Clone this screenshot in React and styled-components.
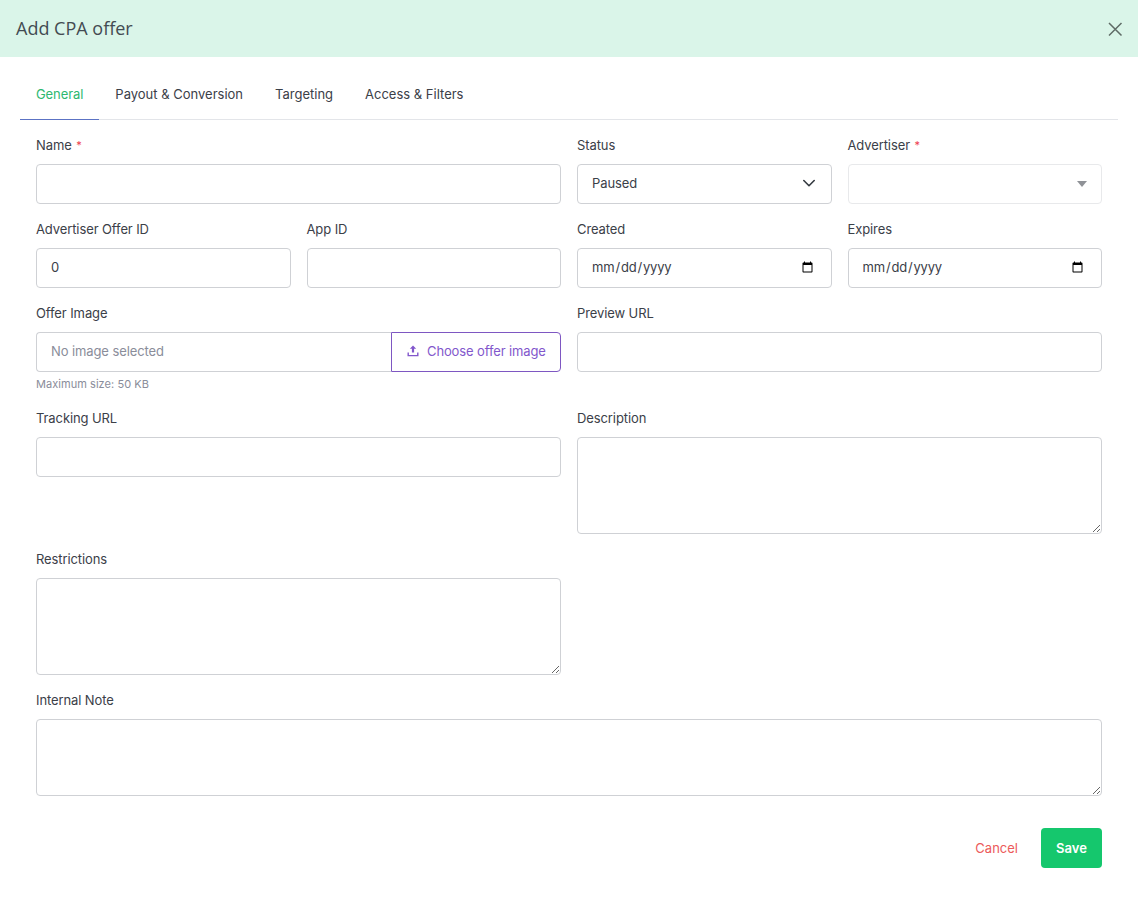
import styled, { createGlobalStyle } from "styled-components";

const GlobalStyle = createGlobalStyle`
  * {
    box-sizing: border-box;
  }

  html,
  body {
    margin: 0;
    background: #ffffff;
  }

  body {
    font-family: "Inter", "Roboto", sans-serif;
    font-size: 13px;
    color: #3b4048;
  }
`;

const tabs = ["General", "Payout & Conversion", "Targeting", "Access & Filters"];

const Required = () => <Star>*</Star>;

const CloseIcon = () => (
  <svg width="16" height="16" viewBox="0 0 16 16" fill="none" stroke="currentColor" strokeWidth="1.5">
    <path d="M2 2l12.500 12.500M14.500 2L2 14.500" />
  </svg>
);

const ChevronIcon = () => (
  <svg width="14" height="14" viewBox="0 0 14 14" fill="none" stroke="#343a40" strokeWidth="1.6" strokeLinecap="round" strokeLinejoin="round">
    <path d="M1.800 4.500L7 9.700l5.200-5.200" />
  </svg>
);

const UploadIcon = () => (
  <svg width="12" height="12" viewBox="0 0 12 12" fill="currentColor">
    <path d="M6 0.500l3.200 3.300H7.100v3.700H4.900V3.800H2.800z" />
    <path d="M0.500 7.500h1.400v2.400h8.200V7.500h1.400v3.800h-11z" />
  </svg>
);

const App = () => {
  return (
    <>
      <GlobalStyle />
      <Modal>
        <Header>
          <Title>Add CPA offer</Title>
          <CloseButton aria-label="Close">
            <CloseIcon />
          </CloseButton>
        </Header>

        <Body>
          <Tabs>
            {tabs.map((tab, i) => (
              <Tab key={tab} $active={i === 0}>
                {tab}
              </Tab>
            ))}
          </Tabs>

          <Form>
            <Field $span={2}>
              <Label>
                Name <Required />
              </Label>
              <Input type="text" />
            </Field>
            <Field>
              <Label>Status</Label>
              <SelectWrap>
                <Select defaultValue="paused">
                  <option value="paused">Paused</option>
                  <option value="active">Active</option>
                </Select>
                <SelectIcon>
                  <ChevronIcon />
                </SelectIcon>
              </SelectWrap>
            </Field>
            <Field>
              <Label>
                Advertiser <Required />
              </Label>
              <Combo>
                <ComboCaret />
              </Combo>
            </Field>

            <Field>
              <Label>Advertiser Offer ID</Label>
              <Input type="text" defaultValue="0" />
            </Field>
            <Field>
              <Label>App ID</Label>
              <Input type="text" />
            </Field>
            <Field>
              <Label>Created</Label>
              <DateInput type="date" />
            </Field>
            <Field>
              <Label>Expires</Label>
              <DateInput type="date" />
            </Field>

            <Field $span={2}>
              <Label>Offer Image</Label>
              <FileRow>
                <FileName>No image selected</FileName>
                <FileButton type="button">
                  <UploadIcon />
                  Choose offer image
                </FileButton>
              </FileRow>
              <Hint>Maximum size: 50 KB</Hint>
            </Field>
            <Field $span={2}>
              <Label>Preview URL</Label>
              <Input type="text" />
            </Field>

            <Field $span={2}>
              <Label>Tracking URL</Label>
              <Input type="text" />
            </Field>
            <Field $span={2}>
              <Label>Description</Label>
              <TextArea $height={97} />
            </Field>

            <Field $span={2}>
              <Label>Restrictions</Label>
              <TextArea $height={97} />
            </Field>
            <Field $span={2} />

            <Field $span={4}>
              <Label>Internal Note</Label>
              <TextArea $height={77} />
            </Field>
          </Form>

          <Footer>
            <CancelButton type="button">Cancel</CancelButton>
            <SaveButton type="button">Save</SaveButton>
          </Footer>
        </Body>
      </Modal>
    </>
  );
};

const Modal = styled.div`
  width: 1138px;
  height: 904px;
  background: #ffffff;
  overflow: hidden;
`;

const Header = styled.header`
  display: flex;
  align-items: center;
  justify-content: space-between;
  height: 57px;
  padding: 0 15px 0 16px;
  background: #daf5e9;
`;

const Title = styled.h5`
  margin: 0 0 2px;
  font-family: "Open Sans", sans-serif;
  font-size: 18px;
  font-weight: 500;
  color: #434b52;
`;

const CloseButton = styled.button`
  display: flex;
  padding: 0;
  border: none;
  background: none;
  color: #5f6b66;
  cursor: pointer;
`;

const Body = styled.div`
  padding: 18px 20px 0;
`;

const Tabs = styled.nav`
  display: flex;
  height: 45px;
  border-bottom: 1px solid #e3e5e9;
`;

const Tab = styled.a`
  display: flex;
  align-items: center;
  height: 45px;
  padding: 0 16px 6px;
  letter-spacing: ${(p) => (p.$active ? "-0.08px" : "0")};
  color: ${(p) => (p.$active ? "#2db870" : "#3b4048")};
  border-bottom: 1px solid ${(p) => (p.$active ? "#5c73c4" : "transparent")};
  cursor: pointer;
`;

const Form = styled.form`
  display: grid;
  grid-template-columns: repeat(4, 1fr);
  column-gap: 16px;
  row-gap: 16px;
  padding: 16px 16px 0;
`;

const Field = styled.div`
  grid-column: span ${(p) => p.$span || 1};
  min-width: 0;
`;

const Label = styled.label`
  display: block;
  height: 20px;
  margin-bottom: 8px;
  line-height: 18px;
  letter-spacing: -0.1px;
  color: #3b4048;
`;

const Star = styled.span`
  margin-left: 1px;
  font-size: 11px;
  vertical-align: 1px;
  color: #ee3b4e;
`;

const Input = styled.input`
  display: block;
  width: 100%;
  height: 40px;
  padding: 0 15px 2px 14px;
  font: inherit;
  letter-spacing: -0.1px;
  color: #3b4048;
  background: #ffffff;
  border: 1px solid #cfd1d5;
  border-radius: 4px;
  outline: none;
`;

const DateInput = styled(Input)`
  padding-left: 13px;
  letter-spacing: -0.2px;
`;

const SelectWrap = styled.div`
  position: relative;
`;

const Select = styled.select`
  display: block;
  width: 100%;
  height: 40px;
  padding: 0 15px 2px 14px;
  font: inherit;
  letter-spacing: -0.1px;
  color: #3b4048;
  background: #ffffff;
  border: 1px solid #cfd1d5;
  border-radius: 4px;
  outline: none;
  appearance: none;
`;

const SelectIcon = styled.span`
  position: absolute;
  top: 12px;
  right: 16px;
  display: flex;
  pointer-events: none;
`;

const Combo = styled.div`
  display: flex;
  align-items: center;
  justify-content: flex-end;
  height: 40px;
  padding-right: 14px;
  border: 1px solid #e8e9eb;
  border-radius: 4px;
`;

const ComboCaret = styled.span`
  width: 0;
  height: 0;
  border-top: 6px solid #8f9297;
  border-left: 5.500px solid transparent;
  border-right: 5.500px solid transparent;
`;

const FileRow = styled.div`
  display: flex;
  height: 40px;
`;

const FileName = styled.div`
  flex: 1;
  display: flex;
  align-items: center;
  padding: 0 0 2px 14px;
  letter-spacing: -0.1px;
  color: #8a8d9a;
  border: 1px solid #cfd1d5;
  border-right: none;
  border-radius: 4px 0 0 4px;
`;

const FileButton = styled.button`
  display: flex;
  align-items: center;
  gap: 8px;
  width: 170px;
  padding: 0 0 2px 15px;
  font: inherit;
  letter-spacing: -0.12px;
  color: #8257cc;
  background: #ffffff;
  border: 1px solid #7e57c2;
  border-radius: 0 4px 4px 0;
  white-space: nowrap;
  cursor: pointer;
`;

const Hint = styled.div`
  height: 21px;
  padding-top: 4px;
  font-size: 11px;
  line-height: 16px;
  letter-spacing: 0.05px;
  color: #8a8d9a;
`;

const TextArea = styled.textarea`
  display: block;
  width: 100%;
  height: ${(p) => p.$height}px;
  padding: 8px 15px;
  font: inherit;
  background: #ffffff;
  border: 1px solid #cfd1d5;
  border-radius: 4px;
  outline: none;
`;

const Footer = styled.footer`
  display: flex;
  align-items: center;
  justify-content: flex-end;
  gap: 23px;
  padding: 32px 16px 0;
`;

const CancelButton = styled.button`
  padding: 0;
  font: inherit;
  color: #ec5a5a;
  background: none;
  border: none;
  cursor: pointer;
`;

const SaveButton = styled.button`
  width: 61px;
  height: 40px;
  font: inherit;
  font-weight: 600;
  color: #ffffff;
  background: #15c76d;
  border: none;
  border-radius: 4px;
  cursor: pointer;
`;

export default App;
